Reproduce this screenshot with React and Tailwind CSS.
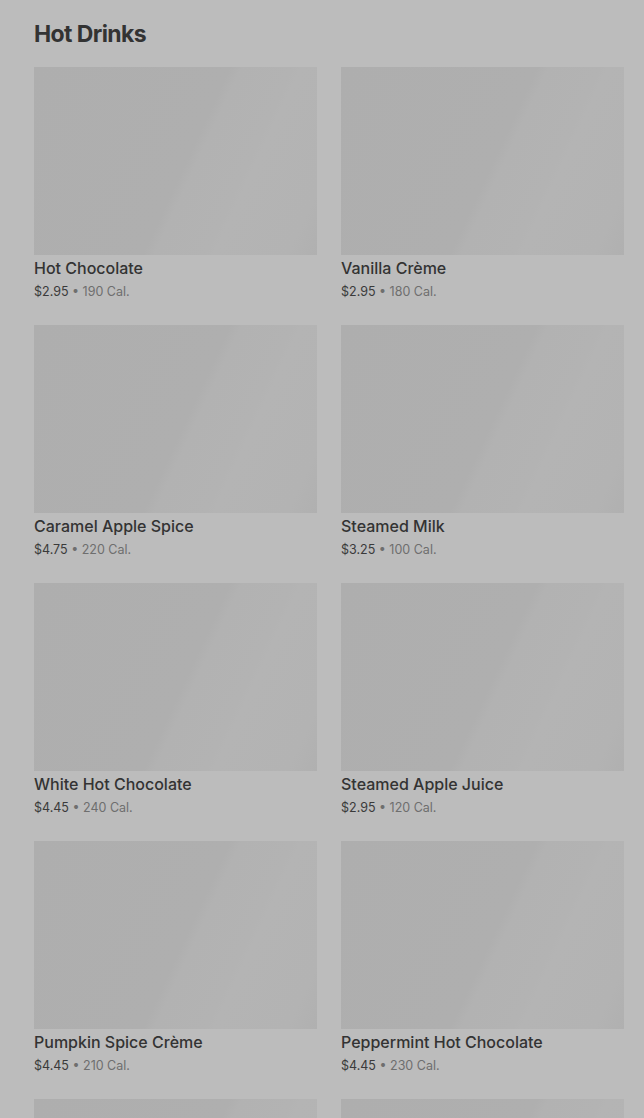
import React from "react";

const items = [
  ["Hot Chocolate", "$2.95", "190 Cal."],
  ["Vanilla Crème", "$2.95", "180 Cal."],
  ["Caramel Apple Spice", "$4.75", "220 Cal."],
  ["Steamed Milk", "$3.25", "100 Cal."],
  ["White Hot Chocolate", "$4.45", "240 Cal."],
  ["Steamed Apple Juice", "$2.95", "120 Cal."],
  ["Pumpkin Spice Crème", "$4.45", "210 Cal."],
  ["Peppermint Hot Chocolate", "$4.45", "230 Cal."],
  ["", "", ""],
  ["", "", ""],
];

function Card({ name, price, cal }) {
  return (
    <div className="flex flex-col">
      <div className="h-[188px] w-full bg-[linear-gradient(115deg,#aeaeae_0%,#afafaf_53%,#b2b2b2_56%,#b3b3b3_70%,#b4b4b4_72%,#b3b3b3_92%,#b0b0b0_100%)]" />
      {name && (
        <div className="pt-[2px]">
          <div className="text-[16px] leading-[22px] font-medium text-[#333333]">{name}</div>
          <div className="text-[12.5px] leading-[20px] mt-[3px]">
            <span className="text-[#3a3a3a]">{price}</span>
            <span className="text-[#6e6e6e]"> • {cal}</span>
          </div>
        </div>
      )}
    </div>
  );
}

export default function App() {
  return (
    <div
      className="w-[644px] h-[1118px] overflow-hidden bg-[#bcbcbc] pl-[34px] pr-[20px]"
      style={{ fontFamily: "Inter, 'Noto Sans', sans-serif" }}
    >
      <h1 className="pt-[19px] text-[23px] leading-[30px] font-bold tracking-[-0.6px] text-[#333333]">
        Hot Drinks
      </h1>
      <div className="grid grid-cols-2 gap-x-[24px] gap-y-[24px] mt-[18px]">
        {items.map((it, i) => (
          <div key={i} className="h-[234px]">
            <Card name={it[0]} price={it[1]} cal={it[2]} />
          </div>
        ))}
      </div>
    </div>
  );
}
